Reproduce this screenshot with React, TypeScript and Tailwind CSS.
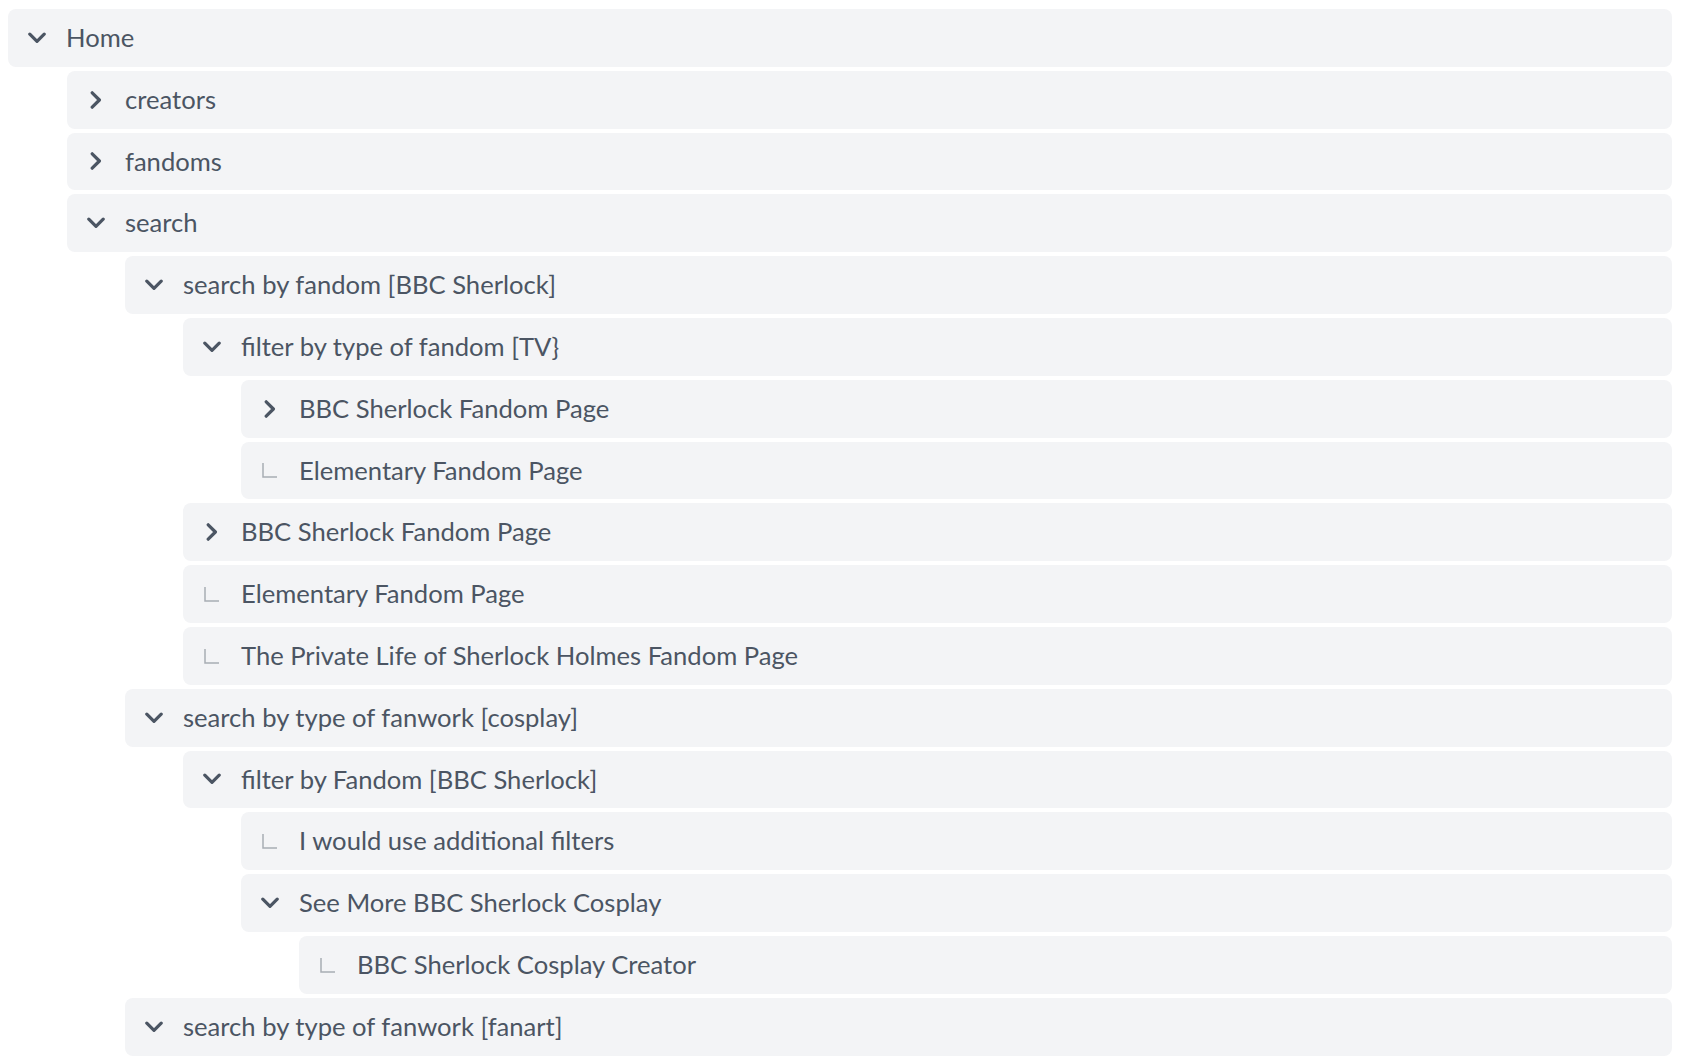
import React from "react";

interface TreeNode {
  label: string;
  open?: boolean;
  hasChildren?: boolean;
  children?: TreeNode[];
}

const tree: TreeNode = {
  label: "Home",
  open: true,
  children: [
    { label: "creators", hasChildren: true },
    { label: "fandoms", hasChildren: true },
    {
      label: "search",
      open: true,
      children: [
        {
          label: "search by fandom [BBC Sherlock]",
          open: true,
          children: [
            {
              label: "filter by type of fandom [TV}",
              open: true,
              children: [
                { label: "BBC Sherlock Fandom Page", hasChildren: true },
                { label: "Elementary Fandom Page" },
              ],
            },
            { label: "BBC Sherlock Fandom Page", hasChildren: true },
            { label: "Elementary Fandom Page" },
            { label: "The Private Life of Sherlock Holmes Fandom Page" },
          ],
        },
        {
          label: "search by type of fanwork [cosplay]",
          open: true,
          children: [
            {
              label: "filter by Fandom [BBC Sherlock]",
              open: true,
              children: [
                { label: "I would use additional filters" },
                {
                  label: "See More BBC Sherlock Cosplay",
                  open: true,
                  children: [{ label: "BBC Sherlock Cosplay Creator" }],
                },
              ],
            },
          ],
        },
        { label: "search by type of fanwork [fanart]", open: true, hasChildren: true },
      ],
    },
  ],
};

const NodeIcon = ({ node }: { node: TreeNode }) => {
  const expandable = node.hasChildren || (node.children && node.children.length > 0);

  if (expandable && node.open) {
    return (
      <svg width="18" height="12" viewBox="0 0 18 12" fill="none">
        <polyline
          points="1.8,2.2 9,9.4 16.2,2.2"
          stroke="#4b5563"
          strokeWidth="3.2"
          strokeLinecap="round"
          strokeLinejoin="round"
        />
      </svg>
    );
  }

  if (expandable) {
    return (
      <svg width="12" height="18" viewBox="0 0 12 18" fill="none">
        <polyline
          points="2.2,1.8 9.4,9 2.2,16.2"
          stroke="#4b5563"
          strokeWidth="3.2"
          strokeLinecap="round"
          strokeLinejoin="round"
        />
      </svg>
    );
  }

  // leaf connector
  return (
    <svg width="16" height="16" viewBox="0 0 16 16" fill="none">
      <polyline points="1,1 1,15 15,15" stroke="#a8adb4" strokeWidth="1.5" />
    </svg>
  );
};

const TreeRow = ({ node, depth }: { node: TreeNode; depth: number }) => {
  return (
    <div className="flex flex-col gap-1">
      <div className="flex items-center h-[57.8px] rounded-lg bg-[#f3f4f6] pl-[18px]">
        <div className="w-[22px] flex items-center justify-center">
          <NodeIcon node={node} />
        </div>
        <span className="ml-[18px] text-[25.6px] text-[#4b5563] leading-none whitespace-nowrap">
          {node.label}
        </span>
      </div>

      {node.open && node.children && node.children.length > 0 && (
        <div className={`flex flex-col gap-1 ${depth === 0 ? "pl-[59px]" : "pl-[58px]"}`}>
          {node.children.map((child, i) => (
            <TreeRow key={i} node={child} depth={depth + 1} />
          ))}
        </div>
      )}
    </div>
  );
};

export default function App() {
  return (
    <div
      className="min-h-screen bg-white pt-[9px] pl-2 pr-[14px]"
      style={{ fontFamily: "Lato, 'Open Sans', sans-serif" }}
    >
      <TreeRow node={tree} depth={0} />
    </div>
  );
}
